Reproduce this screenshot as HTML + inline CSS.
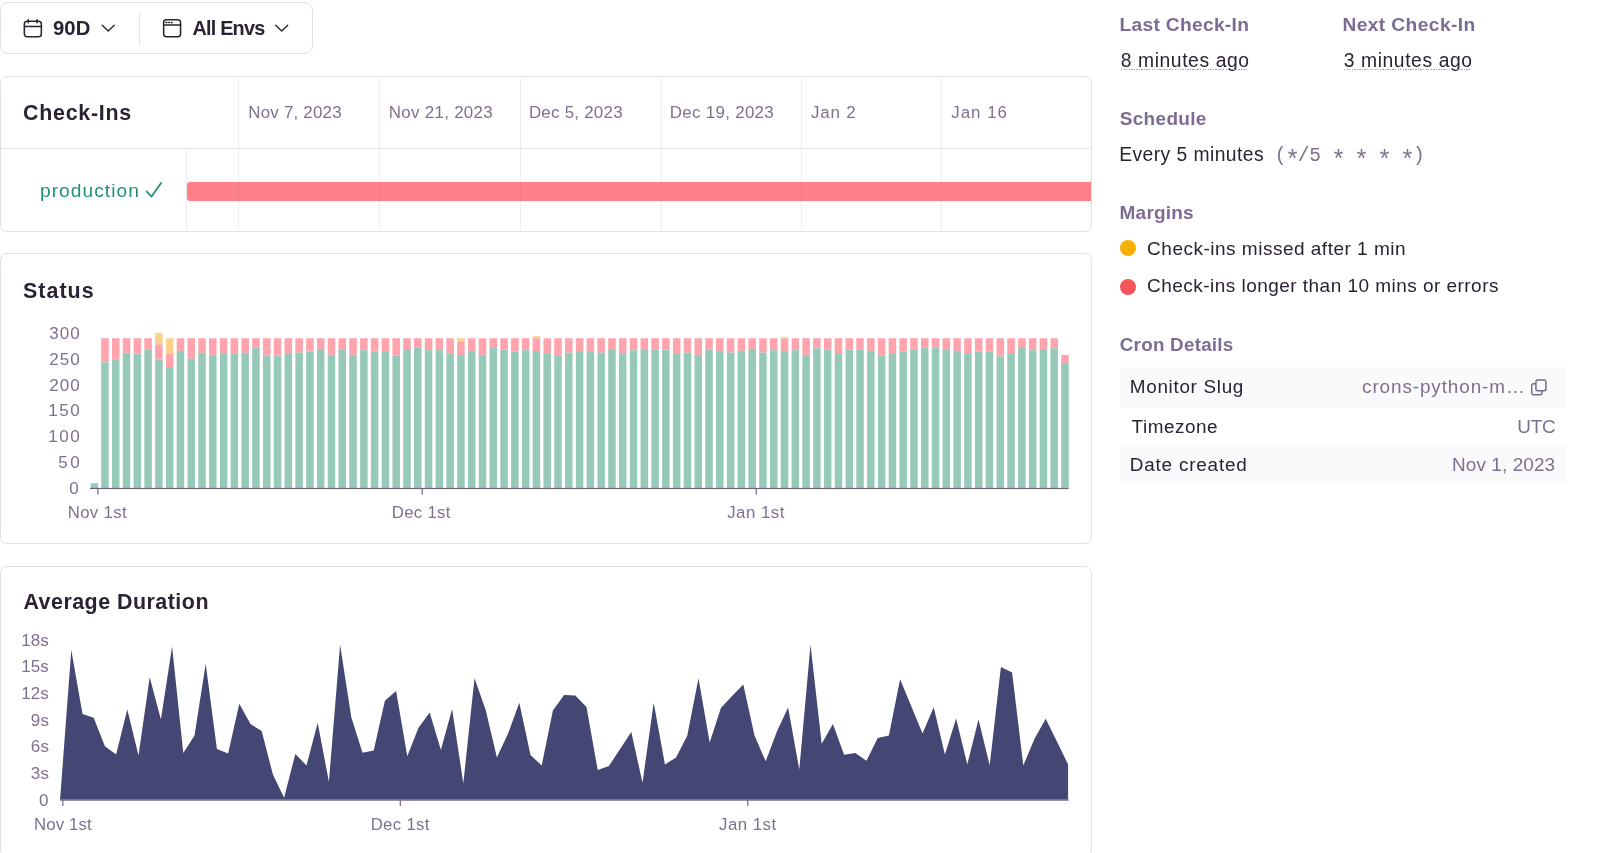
<!DOCTYPE html>
<html><head><meta charset="utf-8"><style>
html,body{margin:0;padding:0;background:#fff;width:1600px;height:853px;overflow:hidden;position:relative}
.t{position:absolute;white-space:nowrap}
.bl{display:inline-block;width:0;height:0;vertical-align:baseline}
</style></head><body><div id="root" style="position:absolute;left:0;top:0;width:1600px;height:853px;will-change:transform">
<div style="position:absolute;left:0.00px;top:2.35px;width:312.65px;height:51.80px;box-sizing:border-box;border:1.3px solid #E2DEE7;border-radius:8px;background:#fff"></div>
<div style="position:absolute;left:139.20px;top:13.00px;width:1.20px;height:30.50px;background:#E2DEE7"></div>
<svg style="position:absolute;left:22px;top:17px" width="22" height="22" viewBox="0 0 22 22" fill="none" stroke="#2B2233" stroke-width="1.55" stroke-linecap="round" stroke-linejoin="round">
<rect x="2.35" y="4.15" width="17" height="15.6" rx="2.8"/><line x1="2.35" y1="9.5" x2="19.35" y2="9.5"/><line x1="6.3" y1="2.8" x2="6.3" y2="5.8"/><line x1="15" y1="2.8" x2="15" y2="5.8"/></svg>
<svg style="position:absolute;left:100px;top:22px" width="16" height="12" viewBox="0 0 16 12" fill="none" stroke="#2B2233" stroke-width="1.4" stroke-linecap="round" stroke-linejoin="round"><polyline points="2.2,3.2 8.2,9.1 14.2,3.2"/></svg>
<div class="t" id="b90d" style="left:53.10px;top:18.00px;font-size:20.30px;line-height:20.30px;font-weight:700;color:#2B2233;letter-spacing:0.000px;font-family:'Liberation Sans', sans-serif;">90D<span class="bl"></span></div>
<svg style="position:absolute;left:161px;top:17px" width="22" height="22" viewBox="0 0 22 22" fill="none" stroke="#2B2233" stroke-width="1.55" stroke-linecap="round" stroke-linejoin="round">
<rect x="2.65" y="2.65" width="16.9" height="17.1" rx="2.8"/><line x1="2.65" y1="8" x2="19.55" y2="8"/><circle cx="5.35" cy="5.5" r="0.55" fill="#2B2233" stroke-width="1"/><circle cx="8" cy="5.5" r="0.55" fill="#2B2233" stroke-width="1"/><circle cx="10.6" cy="5.5" r="0.55" fill="#2B2233" stroke-width="1"/></svg>
<svg style="position:absolute;left:273px;top:22px" width="16" height="12" viewBox="0 0 16 12" fill="none" stroke="#2B2233" stroke-width="1.4" stroke-linecap="round" stroke-linejoin="round"><polyline points="2.7,3.2 8.7,9.1 14.7,3.2"/></svg>
<div class="t" id="benv" style="left:192.50px;top:19.00px;font-size:19.80px;line-height:19.80px;font-weight:700;color:#2B2233;letter-spacing:-0.770px;font-family:'Liberation Sans', sans-serif;">All Envs<span class="bl"></span></div>
<div style="position:absolute;left:0.00px;top:75.85px;width:1092.05px;height:155.70px;box-sizing:border-box;border:1.3px solid #E2DEE7;border-radius:7px;background:#fff"></div>
<div style="position:absolute;left:0.00px;top:147.70px;width:1092.00px;height:1.25px;background:#E2DEE7"></div>
<div style="position:absolute;left:185.80px;top:148.00px;width:1.10px;height:82.00px;background:#ECE9F0"></div>
<div class="t" id="tci" style="left:23.05px;top:103.01px;font-size:21.40px;line-height:21.40px;font-weight:700;color:#2B2233;letter-spacing:0.738px;font-family:'Liberation Sans', sans-serif;">Check-Ins<span class="bl"></span></div>
<div style="position:absolute;left:187.00px;top:181.60px;width:904.00px;height:19.00px;background:#FF808B;border-radius:3px 0 0 3px"></div>
<div style="position:absolute;left:237.80px;top:77.50px;width:1.20px;height:152.50px;background:rgba(100,80,130,0.10)"></div>
<div class="t" id="tl0" style="left:248.35px;top:105.00px;font-size:16.90px;line-height:16.90px;font-weight:400;color:#80708F;letter-spacing:0.215px;font-family:'Liberation Sans', sans-serif;">Nov 7, 2023<span class="bl"></span></div>
<div style="position:absolute;left:378.70px;top:77.50px;width:1.20px;height:152.50px;background:rgba(100,80,130,0.10)"></div>
<div class="t" id="tl1" style="left:388.80px;top:105.00px;font-size:16.90px;line-height:16.90px;font-weight:400;color:#80708F;letter-spacing:0.309px;font-family:'Liberation Sans', sans-serif;">Nov 21, 2023<span class="bl"></span></div>
<div style="position:absolute;left:519.70px;top:77.50px;width:1.20px;height:152.50px;background:rgba(100,80,130,0.10)"></div>
<div class="t" id="tl2" style="left:528.90px;top:105.00px;font-size:16.90px;line-height:16.90px;font-weight:400;color:#80708F;letter-spacing:0.260px;font-family:'Liberation Sans', sans-serif;">Dec 5, 2023<span class="bl"></span></div>
<div style="position:absolute;left:660.60px;top:77.50px;width:1.20px;height:152.50px;background:rgba(100,80,130,0.10)"></div>
<div class="t" id="tl3" style="left:669.80px;top:105.00px;font-size:16.90px;line-height:16.90px;font-weight:400;color:#80708F;letter-spacing:0.310px;font-family:'Liberation Sans', sans-serif;">Dec 19, 2023<span class="bl"></span></div>
<div style="position:absolute;left:801.00px;top:77.50px;width:1.20px;height:152.50px;background:rgba(100,80,130,0.10)"></div>
<div class="t" id="tl4" style="left:811.10px;top:105.00px;font-size:16.90px;line-height:16.90px;font-weight:400;color:#80708F;letter-spacing:0.800px;font-family:'Liberation Sans', sans-serif;">Jan 2<span class="bl"></span></div>
<div style="position:absolute;left:941.20px;top:77.50px;width:1.20px;height:152.50px;background:rgba(100,80,130,0.10)"></div>
<div class="t" id="tl5" style="left:951.30px;top:105.00px;font-size:16.90px;line-height:16.90px;font-weight:400;color:#80708F;letter-spacing:0.980px;font-family:'Liberation Sans', sans-serif;">Jan 16<span class="bl"></span></div>
<div class="t" id="prod" style="left:39.94px;top:181.00px;font-size:19.20px;line-height:19.20px;font-weight:400;color:#1F9176;letter-spacing:1.040px;font-family:'Liberation Sans', sans-serif;">production<span class="bl"></span></div>
<svg style="position:absolute;left:143px;top:179px" width="22" height="20" viewBox="0 0 22 20" fill="none" stroke="#1F9176" stroke-width="1.8" stroke-linecap="round" stroke-linejoin="round"><polyline points="3.6,12.4 8.5,17.5 18.1,3.9"/></svg>
<div style="position:absolute;left:0.00px;top:253.45px;width:1092.05px;height:290.60px;box-sizing:border-box;border:1.3px solid #E2DEE7;border-radius:7px;background:#fff"></div>
<div class="t" id="tst" style="left:22.90px;top:281.01px;font-size:21.40px;line-height:21.40px;font-weight:700;color:#2B2233;letter-spacing:1.080px;font-family:'Liberation Sans', sans-serif;">Status<span class="bl"></span></div>
<div class="t" id="sy0" style="left:49.23px;top:324.61px;font-size:17.00px;line-height:17.00px;font-weight:400;color:#80708F;letter-spacing:1.035px;font-family:'Liberation Sans', sans-serif;">300<span class="bl"></span></div>
<div class="t" id="sy1" style="left:49.23px;top:350.56px;font-size:17.00px;line-height:17.00px;font-weight:400;color:#80708F;letter-spacing:1.035px;font-family:'Liberation Sans', sans-serif;">250<span class="bl"></span></div>
<div class="t" id="sy2" style="left:49.23px;top:376.50px;font-size:17.00px;line-height:17.00px;font-weight:400;color:#80708F;letter-spacing:1.035px;font-family:'Liberation Sans', sans-serif;">200<span class="bl"></span></div>
<div class="t" id="sy3" style="left:48.33px;top:402.46px;font-size:17.00px;line-height:17.00px;font-weight:400;color:#80708F;letter-spacing:1.485px;font-family:'Liberation Sans', sans-serif;">150<span class="bl"></span></div>
<div class="t" id="sy4" style="left:48.33px;top:428.41px;font-size:17.00px;line-height:17.00px;font-weight:400;color:#80708F;letter-spacing:1.485px;font-family:'Liberation Sans', sans-serif;">100<span class="bl"></span></div>
<div class="t" id="sy5" style="left:58.25px;top:454.36px;font-size:17.00px;line-height:17.00px;font-weight:400;color:#80708F;letter-spacing:2.500px;font-family:'Liberation Sans', sans-serif;">50<span class="bl"></span></div>
<div class="t" id="sy6" style="left:69.30px;top:480.31px;font-size:17.00px;line-height:17.00px;font-weight:400;color:#80708F;letter-spacing:4.750px;font-family:'Liberation Sans', sans-serif;">0<span class="bl"></span></div>
<div style="position:absolute;left:0.00px;top:565.65px;width:1092.05px;height:290.00px;box-sizing:border-box;border:1.3px solid #E2DEE7;border-radius:7px;background:#fff"></div>
<svg style="position:absolute;left:0;top:0" width="1100" height="860">
<rect x="101.20" y="338.25" width="7.5" height="24.00" fill="#FFA3AD"/>
<rect x="101.20" y="362.25" width="7.5" height="125.95" fill="#97C9B8"/>
<rect x="111.99" y="338.25" width="7.5" height="21.00" fill="#FFA3AD"/>
<rect x="111.99" y="359.25" width="7.5" height="128.95" fill="#97C9B8"/>
<rect x="122.77" y="338.25" width="7.5" height="14.60" fill="#FFA3AD"/>
<rect x="122.77" y="352.85" width="7.5" height="135.35" fill="#97C9B8"/>
<rect x="133.56" y="338.25" width="7.5" height="15.10" fill="#FFA3AD"/>
<rect x="133.56" y="353.35" width="7.5" height="134.85" fill="#97C9B8"/>
<rect x="144.35" y="338.25" width="7.5" height="11.00" fill="#FFA3AD"/>
<rect x="144.35" y="349.25" width="7.5" height="138.95" fill="#97C9B8"/>
<rect x="155.13" y="332.90" width="7.5" height="11.50" fill="#FAD28B"/>
<rect x="155.13" y="344.40" width="7.5" height="15.20" fill="#FFA3AD"/>
<rect x="155.13" y="359.60" width="7.5" height="128.60" fill="#97C9B8"/>
<rect x="165.92" y="338.25" width="7.5" height="15.55" fill="#FAD28B"/>
<rect x="165.92" y="353.80" width="7.5" height="13.20" fill="#FFA3AD"/>
<rect x="165.92" y="367.00" width="7.5" height="121.20" fill="#97C9B8"/>
<rect x="176.71" y="338.25" width="7.5" height="12.60" fill="#FFA3AD"/>
<rect x="176.71" y="350.85" width="7.5" height="137.35" fill="#97C9B8"/>
<rect x="187.50" y="338.25" width="7.5" height="20.50" fill="#FFA3AD"/>
<rect x="187.50" y="358.75" width="7.5" height="129.45" fill="#97C9B8"/>
<rect x="198.28" y="338.25" width="7.5" height="14.60" fill="#FFA3AD"/>
<rect x="198.28" y="352.85" width="7.5" height="135.35" fill="#97C9B8"/>
<rect x="209.07" y="338.25" width="7.5" height="16.60" fill="#FFA3AD"/>
<rect x="209.07" y="354.85" width="7.5" height="133.35" fill="#97C9B8"/>
<rect x="219.86" y="338.25" width="7.5" height="14.60" fill="#FFA3AD"/>
<rect x="219.86" y="352.85" width="7.5" height="135.35" fill="#97C9B8"/>
<rect x="230.64" y="338.25" width="7.5" height="15.60" fill="#FFA3AD"/>
<rect x="230.64" y="353.85" width="7.5" height="134.35" fill="#97C9B8"/>
<rect x="241.43" y="338.25" width="7.5" height="14.60" fill="#FFA3AD"/>
<rect x="241.43" y="352.85" width="7.5" height="135.35" fill="#97C9B8"/>
<rect x="252.22" y="338.25" width="7.5" height="9.50" fill="#FFA3AD"/>
<rect x="252.22" y="347.75" width="7.5" height="140.45" fill="#97C9B8"/>
<rect x="263.00" y="338.25" width="7.5" height="17.40" fill="#FFA3AD"/>
<rect x="263.00" y="355.65" width="7.5" height="132.55" fill="#97C9B8"/>
<rect x="273.79" y="338.25" width="7.5" height="17.10" fill="#FFA3AD"/>
<rect x="273.79" y="355.35" width="7.5" height="132.85" fill="#97C9B8"/>
<rect x="284.58" y="338.25" width="7.5" height="14.70" fill="#FFA3AD"/>
<rect x="284.58" y="352.95" width="7.5" height="135.25" fill="#97C9B8"/>
<rect x="295.37" y="338.25" width="7.5" height="14.40" fill="#FFA3AD"/>
<rect x="295.37" y="352.65" width="7.5" height="135.55" fill="#97C9B8"/>
<rect x="306.15" y="338.25" width="7.5" height="13.30" fill="#FFA3AD"/>
<rect x="306.15" y="351.55" width="7.5" height="136.65" fill="#97C9B8"/>
<rect x="316.94" y="338.25" width="7.5" height="10.80" fill="#FFA3AD"/>
<rect x="316.94" y="349.05" width="7.5" height="139.15" fill="#97C9B8"/>
<rect x="327.73" y="338.25" width="7.5" height="16.60" fill="#FFA3AD"/>
<rect x="327.73" y="354.85" width="7.5" height="133.35" fill="#97C9B8"/>
<rect x="338.51" y="338.25" width="7.5" height="11.60" fill="#FFA3AD"/>
<rect x="338.51" y="349.85" width="7.5" height="138.35" fill="#97C9B8"/>
<rect x="349.30" y="338.25" width="7.5" height="16.60" fill="#FFA3AD"/>
<rect x="349.30" y="354.85" width="7.5" height="133.35" fill="#97C9B8"/>
<rect x="360.09" y="338.25" width="7.5" height="12.00" fill="#FFA3AD"/>
<rect x="360.09" y="350.25" width="7.5" height="137.95" fill="#97C9B8"/>
<rect x="370.88" y="338.25" width="7.5" height="13.30" fill="#FFA3AD"/>
<rect x="370.88" y="351.55" width="7.5" height="136.65" fill="#97C9B8"/>
<rect x="381.66" y="338.25" width="7.5" height="13.80" fill="#FFA3AD"/>
<rect x="381.66" y="352.05" width="7.5" height="136.15" fill="#97C9B8"/>
<rect x="392.45" y="338.25" width="7.5" height="17.40" fill="#FFA3AD"/>
<rect x="392.45" y="355.65" width="7.5" height="132.55" fill="#97C9B8"/>
<rect x="403.24" y="338.25" width="7.5" height="10.80" fill="#FFA3AD"/>
<rect x="403.24" y="349.05" width="7.5" height="139.15" fill="#97C9B8"/>
<rect x="414.02" y="338.25" width="7.5" height="9.50" fill="#FFA3AD"/>
<rect x="414.02" y="347.75" width="7.5" height="140.45" fill="#97C9B8"/>
<rect x="424.81" y="338.25" width="7.5" height="12.00" fill="#FFA3AD"/>
<rect x="424.81" y="350.25" width="7.5" height="137.95" fill="#97C9B8"/>
<rect x="435.60" y="338.25" width="7.5" height="11.60" fill="#FFA3AD"/>
<rect x="435.60" y="349.85" width="7.5" height="138.35" fill="#97C9B8"/>
<rect x="446.38" y="338.25" width="7.5" height="15.20" fill="#FFA3AD"/>
<rect x="446.38" y="353.45" width="7.5" height="134.75" fill="#97C9B8"/>
<rect x="457.17" y="338.25" width="7.5" height="3.75" fill="#FAD28B"/>
<rect x="457.17" y="342.00" width="7.5" height="12.85" fill="#FFA3AD"/>
<rect x="457.17" y="354.85" width="7.5" height="133.35" fill="#97C9B8"/>
<rect x="467.96" y="338.25" width="7.5" height="12.60" fill="#FFA3AD"/>
<rect x="467.96" y="350.85" width="7.5" height="137.35" fill="#97C9B8"/>
<rect x="478.75" y="338.25" width="7.5" height="16.90" fill="#FFA3AD"/>
<rect x="478.75" y="355.15" width="7.5" height="133.05" fill="#97C9B8"/>
<rect x="489.53" y="338.25" width="7.5" height="8.90" fill="#FFA3AD"/>
<rect x="489.53" y="347.15" width="7.5" height="141.05" fill="#97C9B8"/>
<rect x="500.32" y="338.25" width="7.5" height="11.30" fill="#FFA3AD"/>
<rect x="500.32" y="349.55" width="7.5" height="138.65" fill="#97C9B8"/>
<rect x="511.11" y="338.25" width="7.5" height="13.30" fill="#FFA3AD"/>
<rect x="511.11" y="351.55" width="7.5" height="136.65" fill="#97C9B8"/>
<rect x="521.89" y="338.25" width="7.5" height="12.00" fill="#FFA3AD"/>
<rect x="521.89" y="350.25" width="7.5" height="137.95" fill="#97C9B8"/>
<rect x="532.68" y="336.20" width="7.5" height="2.05" fill="#FAD28B"/>
<rect x="532.68" y="338.25" width="7.5" height="12.75" fill="#FFA3AD"/>
<rect x="532.68" y="351.00" width="7.5" height="137.20" fill="#97C9B8"/>
<rect x="543.47" y="338.25" width="7.5" height="14.90" fill="#FFA3AD"/>
<rect x="543.47" y="353.15" width="7.5" height="135.05" fill="#97C9B8"/>
<rect x="554.25" y="338.25" width="7.5" height="16.90" fill="#FFA3AD"/>
<rect x="554.25" y="355.15" width="7.5" height="133.05" fill="#97C9B8"/>
<rect x="565.04" y="338.25" width="7.5" height="14.40" fill="#FFA3AD"/>
<rect x="565.04" y="352.65" width="7.5" height="135.55" fill="#97C9B8"/>
<rect x="575.83" y="338.25" width="7.5" height="13.80" fill="#FFA3AD"/>
<rect x="575.83" y="352.05" width="7.5" height="136.15" fill="#97C9B8"/>
<rect x="586.62" y="338.25" width="7.5" height="13.80" fill="#FFA3AD"/>
<rect x="586.62" y="352.05" width="7.5" height="136.15" fill="#97C9B8"/>
<rect x="597.40" y="338.25" width="7.5" height="14.40" fill="#FFA3AD"/>
<rect x="597.40" y="352.65" width="7.5" height="135.55" fill="#97C9B8"/>
<rect x="608.19" y="338.25" width="7.5" height="10.80" fill="#FFA3AD"/>
<rect x="608.19" y="349.05" width="7.5" height="139.15" fill="#97C9B8"/>
<rect x="618.98" y="338.25" width="7.5" height="14.90" fill="#FFA3AD"/>
<rect x="618.98" y="353.15" width="7.5" height="135.05" fill="#97C9B8"/>
<rect x="629.76" y="338.25" width="7.5" height="12.00" fill="#FFA3AD"/>
<rect x="629.76" y="350.25" width="7.5" height="137.95" fill="#97C9B8"/>
<rect x="640.55" y="338.25" width="7.5" height="10.80" fill="#FFA3AD"/>
<rect x="640.55" y="349.05" width="7.5" height="139.15" fill="#97C9B8"/>
<rect x="651.34" y="338.25" width="7.5" height="11.60" fill="#FFA3AD"/>
<rect x="651.34" y="349.85" width="7.5" height="138.35" fill="#97C9B8"/>
<rect x="662.12" y="338.25" width="7.5" height="11.30" fill="#FFA3AD"/>
<rect x="662.12" y="349.55" width="7.5" height="138.65" fill="#97C9B8"/>
<rect x="672.91" y="338.25" width="7.5" height="14.90" fill="#FFA3AD"/>
<rect x="672.91" y="353.15" width="7.5" height="135.05" fill="#97C9B8"/>
<rect x="683.70" y="338.25" width="7.5" height="14.40" fill="#FFA3AD"/>
<rect x="683.70" y="352.65" width="7.5" height="135.55" fill="#97C9B8"/>
<rect x="694.49" y="338.25" width="7.5" height="16.60" fill="#FFA3AD"/>
<rect x="694.49" y="354.85" width="7.5" height="133.35" fill="#97C9B8"/>
<rect x="705.27" y="338.25" width="7.5" height="11.60" fill="#FFA3AD"/>
<rect x="705.27" y="349.85" width="7.5" height="138.35" fill="#97C9B8"/>
<rect x="716.06" y="338.25" width="7.5" height="12.60" fill="#FFA3AD"/>
<rect x="716.06" y="350.85" width="7.5" height="137.35" fill="#97C9B8"/>
<rect x="726.85" y="338.25" width="7.5" height="14.40" fill="#FFA3AD"/>
<rect x="726.85" y="352.65" width="7.5" height="135.55" fill="#97C9B8"/>
<rect x="737.63" y="338.25" width="7.5" height="12.60" fill="#FFA3AD"/>
<rect x="737.63" y="350.85" width="7.5" height="137.35" fill="#97C9B8"/>
<rect x="748.42" y="338.25" width="7.5" height="10.80" fill="#FFA3AD"/>
<rect x="748.42" y="349.05" width="7.5" height="139.15" fill="#97C9B8"/>
<rect x="759.21" y="338.25" width="7.5" height="14.40" fill="#FFA3AD"/>
<rect x="759.21" y="352.65" width="7.5" height="135.55" fill="#97C9B8"/>
<rect x="769.99" y="338.25" width="7.5" height="12.00" fill="#FFA3AD"/>
<rect x="769.99" y="350.25" width="7.5" height="137.95" fill="#97C9B8"/>
<rect x="780.78" y="337.00" width="7.5" height="1.75" fill="#FAD28B"/>
<rect x="780.78" y="338.75" width="7.5" height="13.30" fill="#FFA3AD"/>
<rect x="780.78" y="352.05" width="7.5" height="136.15" fill="#97C9B8"/>
<rect x="791.57" y="338.25" width="7.5" height="12.00" fill="#FFA3AD"/>
<rect x="791.57" y="350.25" width="7.5" height="137.95" fill="#97C9B8"/>
<rect x="802.36" y="338.25" width="7.5" height="16.60" fill="#FFA3AD"/>
<rect x="802.36" y="354.85" width="7.5" height="133.35" fill="#97C9B8"/>
<rect x="813.14" y="338.25" width="7.5" height="10.00" fill="#FFA3AD"/>
<rect x="813.14" y="348.25" width="7.5" height="139.95" fill="#97C9B8"/>
<rect x="823.93" y="338.25" width="7.5" height="11.60" fill="#FFA3AD"/>
<rect x="823.93" y="349.85" width="7.5" height="138.35" fill="#97C9B8"/>
<rect x="834.72" y="338.25" width="7.5" height="14.90" fill="#FFA3AD"/>
<rect x="834.72" y="353.15" width="7.5" height="135.05" fill="#97C9B8"/>
<rect x="845.50" y="338.25" width="7.5" height="11.30" fill="#FFA3AD"/>
<rect x="845.50" y="349.55" width="7.5" height="138.65" fill="#97C9B8"/>
<rect x="856.29" y="338.25" width="7.5" height="11.60" fill="#FFA3AD"/>
<rect x="856.29" y="349.85" width="7.5" height="138.35" fill="#97C9B8"/>
<rect x="867.08" y="338.25" width="7.5" height="12.60" fill="#FFA3AD"/>
<rect x="867.08" y="350.85" width="7.5" height="137.35" fill="#97C9B8"/>
<rect x="877.86" y="338.25" width="7.5" height="17.40" fill="#FFA3AD"/>
<rect x="877.86" y="355.65" width="7.5" height="132.55" fill="#97C9B8"/>
<rect x="888.65" y="338.25" width="7.5" height="14.90" fill="#FFA3AD"/>
<rect x="888.65" y="353.15" width="7.5" height="135.05" fill="#97C9B8"/>
<rect x="899.44" y="338.25" width="7.5" height="13.10" fill="#FFA3AD"/>
<rect x="899.44" y="351.35" width="7.5" height="136.85" fill="#97C9B8"/>
<rect x="910.23" y="338.25" width="7.5" height="11.70" fill="#FFA3AD"/>
<rect x="910.23" y="349.95" width="7.5" height="138.25" fill="#97C9B8"/>
<rect x="921.01" y="338.25" width="7.5" height="9.60" fill="#FFA3AD"/>
<rect x="921.01" y="347.85" width="7.5" height="140.35" fill="#97C9B8"/>
<rect x="931.80" y="338.25" width="7.5" height="9.60" fill="#FFA3AD"/>
<rect x="931.80" y="347.85" width="7.5" height="140.35" fill="#97C9B8"/>
<rect x="942.59" y="338.25" width="7.5" height="11.80" fill="#FFA3AD"/>
<rect x="942.59" y="350.05" width="7.5" height="138.15" fill="#97C9B8"/>
<rect x="953.37" y="338.25" width="7.5" height="12.60" fill="#FFA3AD"/>
<rect x="953.37" y="350.85" width="7.5" height="137.35" fill="#97C9B8"/>
<rect x="964.16" y="338.25" width="7.5" height="15.60" fill="#FFA3AD"/>
<rect x="964.16" y="353.85" width="7.5" height="134.35" fill="#97C9B8"/>
<rect x="974.95" y="338.25" width="7.5" height="13.50" fill="#FFA3AD"/>
<rect x="974.95" y="351.75" width="7.5" height="136.45" fill="#97C9B8"/>
<rect x="985.73" y="338.25" width="7.5" height="13.50" fill="#FFA3AD"/>
<rect x="985.73" y="351.75" width="7.5" height="136.45" fill="#97C9B8"/>
<rect x="996.52" y="338.25" width="7.5" height="18.10" fill="#FFA3AD"/>
<rect x="996.52" y="356.35" width="7.5" height="131.85" fill="#97C9B8"/>
<rect x="1007.31" y="338.25" width="7.5" height="14.80" fill="#FFA3AD"/>
<rect x="1007.31" y="353.05" width="7.5" height="135.15" fill="#97C9B8"/>
<rect x="1018.10" y="338.25" width="7.5" height="8.90" fill="#FFA3AD"/>
<rect x="1018.10" y="347.15" width="7.5" height="141.05" fill="#97C9B8"/>
<rect x="1028.88" y="338.25" width="7.5" height="12.00" fill="#FFA3AD"/>
<rect x="1028.88" y="350.25" width="7.5" height="137.95" fill="#97C9B8"/>
<rect x="1039.67" y="338.25" width="7.5" height="11.70" fill="#FFA3AD"/>
<rect x="1039.67" y="349.95" width="7.5" height="138.25" fill="#97C9B8"/>
<rect x="1050.46" y="338.25" width="7.5" height="10.00" fill="#FFA3AD"/>
<rect x="1050.46" y="348.25" width="7.5" height="139.95" fill="#97C9B8"/>
<rect x="1061.24" y="354.90" width="7.5" height="7.90" fill="#FFA3AD"/>
<rect x="1061.24" y="362.80" width="7.5" height="125.40" fill="#97C9B8"/>
<rect x="90.70" y="483.00" width="7.5" height="1.10" fill="#FFA3AD"/>
<rect x="90.70" y="484.10" width="7.5" height="4.10" fill="#97C9B8"/>
<rect x="90" y="487.9" width="978.6" height="1.2" fill="#71637E"/>
<rect x="97.30" y="488.5" width="1.2" height="6" fill="#71637E"/>
<rect x="421.60" y="488.5" width="1.2" height="6" fill="#71637E"/>
<rect x="755.65" y="488.5" width="1.2" height="6" fill="#71637E"/>
<polygon points="60.1,799.6 60.10,799.20 71.30,649.90 82.50,714.10 93.70,717.80 104.90,746.30 116.10,754.50 127.30,709.40 138.50,755.50 149.70,677.20 160.90,719.60 172.10,646.40 183.30,753.10 194.50,735.60 205.70,663.80 216.90,749.00 228.10,753.50 239.30,703.80 250.50,724.00 261.70,730.90 272.90,774.60 284.10,797.80 295.30,754.10 306.50,765.40 317.70,722.70 328.90,781.80 340.10,644.80 351.30,717.20 362.50,752.70 373.70,750.60 384.90,700.80 396.10,691.10 407.30,756.20 418.50,727.80 429.70,712.50 440.90,750.00 452.10,709.00 463.30,783.40 474.50,678.20 485.70,710.00 496.90,757.60 508.10,733.60 519.30,702.80 530.50,755.10 541.70,765.40 552.90,710.40 564.10,695.00 575.30,695.60 586.50,706.90 597.70,770.10 608.90,766.00 620.10,749.00 631.30,732.00 642.50,782.80 653.70,702.80 664.90,764.40 676.10,757.60 687.30,735.60 698.50,678.20 709.70,742.40 720.90,708.00 732.10,696.00 743.30,684.40 754.50,735.60 765.70,761.30 776.90,731.50 788.10,707.50 799.30,769.50 810.50,644.80 821.70,743.80 832.90,724.00 844.10,754.70 855.30,753.10 866.50,760.70 877.70,738.10 888.90,735.60 900.10,679.20 911.30,706.30 922.50,733.60 933.70,707.30 944.90,754.50 956.10,718.60 967.30,764.40 978.50,719.60 989.70,765.40 1000.90,666.90 1012.10,672.50 1023.30,765.50 1034.50,738.80 1045.70,718.70 1056.90,741.50 1068.10,764.40 1068.1,799.6" fill="#444674"/>
<rect x="60" y="799.3" width="1008.6" height="1.4" fill="#71637E"/>
<rect x="62.20" y="800" width="1.2" height="6" fill="#71637E"/>
<rect x="399.70" y="800" width="1.2" height="6" fill="#71637E"/>
<rect x="747.20" y="800" width="1.2" height="6" fill="#71637E"/>
</svg>
<div class="t" id="tad" style="left:23.45px;top:592.01px;font-size:21.40px;line-height:21.40px;font-weight:700;color:#2B2233;letter-spacing:0.500px;font-family:'Liberation Sans', sans-serif;">Average Duration<span class="bl"></span></div>
<div class="t" id="dy0" style="left:21.35px;top:631.81px;font-size:17.00px;line-height:17.00px;font-weight:400;color:#80708F;letter-spacing:-0.025px;font-family:'Liberation Sans', sans-serif;">18s<span class="bl"></span></div>
<div class="t" id="dy1" style="left:21.35px;top:658.48px;font-size:17.00px;line-height:17.00px;font-weight:400;color:#80708F;letter-spacing:-0.025px;font-family:'Liberation Sans', sans-serif;">15s<span class="bl"></span></div>
<div class="t" id="dy2" style="left:21.35px;top:685.15px;font-size:17.00px;line-height:17.00px;font-weight:400;color:#80708F;letter-spacing:-0.025px;font-family:'Liberation Sans', sans-serif;">12s<span class="bl"></span></div>
<div class="t" id="dy3" style="left:30.85px;top:711.82px;font-size:17.00px;line-height:17.00px;font-weight:400;color:#80708F;letter-spacing:0.200px;font-family:'Liberation Sans', sans-serif;">9s<span class="bl"></span></div>
<div class="t" id="dy4" style="left:30.85px;top:738.49px;font-size:17.00px;line-height:17.00px;font-weight:400;color:#80708F;letter-spacing:0.200px;font-family:'Liberation Sans', sans-serif;">6s<span class="bl"></span></div>
<div class="t" id="dy5" style="left:30.85px;top:765.15px;font-size:17.00px;line-height:17.00px;font-weight:400;color:#80708F;letter-spacing:0.200px;font-family:'Liberation Sans', sans-serif;">3s<span class="bl"></span></div>
<div class="t" id="dy6" style="left:39.00px;top:791.82px;font-size:17.00px;line-height:17.00px;font-weight:400;color:#80708F;letter-spacing:2.000px;font-family:'Liberation Sans', sans-serif;">0<span class="bl"></span></div>
<div class="t" id="sx0" style="left:67.72px;top:505.01px;font-size:16.80px;line-height:16.80px;font-weight:400;color:#80708F;letter-spacing:0.350px;font-family:'Liberation Sans', sans-serif;">Nov 1st<span class="bl"></span></div>
<div class="t" id="sx1" style="left:391.75px;top:505.01px;font-size:16.80px;line-height:16.80px;font-weight:400;color:#80708F;letter-spacing:0.300px;font-family:'Liberation Sans', sans-serif;">Dec 1st<span class="bl"></span></div>
<div class="t" id="sx2" style="left:727.20px;top:505.01px;font-size:16.80px;line-height:16.80px;font-weight:400;color:#80708F;letter-spacing:0.525px;font-family:'Liberation Sans', sans-serif;">Jan 1st<span class="bl"></span></div>
<div class="t" id="dx0" style="left:34.10px;top:817.00px;font-size:16.80px;line-height:16.80px;font-weight:400;color:#80708F;letter-spacing:0.125px;font-family:'Liberation Sans', sans-serif;">Nov 1st<span class="bl"></span></div>
<div class="t" id="dx1" style="left:370.70px;top:817.00px;font-size:16.80px;line-height:16.80px;font-weight:400;color:#80708F;letter-spacing:0.300px;font-family:'Liberation Sans', sans-serif;">Dec 1st<span class="bl"></span></div>
<div class="t" id="dx2" style="left:719.00px;top:817.00px;font-size:16.80px;line-height:16.80px;font-weight:400;color:#80708F;letter-spacing:0.490px;font-family:'Liberation Sans', sans-serif;">Jan 1st<span class="bl"></span></div>
<div class="t" id="rlast" style="left:1119.44px;top:15.00px;font-size:19.20px;line-height:19.20px;font-weight:700;color:#7C6C93;letter-spacing:0.306px;font-family:'Liberation Sans', sans-serif;">Last Check-In<span class="bl"></span></div>
<div class="t" id="rnext" style="left:1342.44px;top:15.00px;font-size:19.20px;line-height:19.20px;font-weight:700;color:#7C6C93;letter-spacing:0.400px;font-family:'Liberation Sans', sans-serif;">Next Check-In<span class="bl"></span></div>
<div class="t" id="r8" style="left:1120.70px;top:50.86px;font-size:19.30px;line-height:19.30px;font-weight:400;color:#2B2233;letter-spacing:0.600px;font-family:'Liberation Sans', sans-serif;">8 minutes ago<span class="bl"></span></div>
<div class="t" id="r3" style="left:1343.70px;top:50.86px;font-size:19.30px;line-height:19.30px;font-weight:400;color:#2B2233;letter-spacing:0.600px;font-family:'Liberation Sans', sans-serif;">3 minutes ago<span class="bl"></span></div>
<div class="t" id="rsch" style="left:1119.76px;top:109.01px;font-size:19.00px;line-height:19.00px;font-weight:700;color:#7C6C93;letter-spacing:0.305px;font-family:'Liberation Sans', sans-serif;">Schedule<span class="bl"></span></div>
<div class="t" id="revery" style="left:1119.15px;top:145.01px;font-size:19.30px;line-height:19.30px;font-weight:400;color:#2B2233;letter-spacing:0.446px;font-family:'Liberation Sans', sans-serif;">Every 5 minutes<span class="bl"></span></div>
<div style="position:absolute;left:1274.65px;top:147.31px;width:11.70px;text-align:center;font-family:'Liberation Mono', monospace;font-size:19.5px;line-height:19.5px;color:#80708F">(</div>
<div style="position:absolute;left:1297.65px;top:147.31px;width:11.70px;text-align:center;font-family:'Liberation Mono', monospace;font-size:19.5px;line-height:19.5px;color:#80708F">/</div>
<div style="position:absolute;left:1309.35px;top:147.31px;width:11.70px;text-align:center;font-family:'Liberation Mono', monospace;font-size:19.5px;line-height:19.5px;color:#80708F">5</div>
<div style="position:absolute;left:1412.95px;top:147.31px;width:11.70px;text-align:center;font-family:'Liberation Mono', monospace;font-size:19.5px;line-height:19.5px;color:#80708F">)</div>
<div style="position:absolute;left:1285.00px;top:148.50px;width:15.00px;text-align:center;font-family:'Liberation Mono', monospace;font-size:25px;line-height:25px;color:#80708F">*</div>
<div style="position:absolute;left:1331.00px;top:148.50px;width:15.00px;text-align:center;font-family:'Liberation Mono', monospace;font-size:25px;line-height:25px;color:#80708F">*</div>
<div style="position:absolute;left:1354.00px;top:148.50px;width:15.00px;text-align:center;font-family:'Liberation Mono', monospace;font-size:25px;line-height:25px;color:#80708F">*</div>
<div style="position:absolute;left:1377.00px;top:148.50px;width:15.00px;text-align:center;font-family:'Liberation Mono', monospace;font-size:25px;line-height:25px;color:#80708F">*</div>
<div style="position:absolute;left:1400.00px;top:148.50px;width:15.00px;text-align:center;font-family:'Liberation Mono', monospace;font-size:25px;line-height:25px;color:#80708F">*</div>
<div style="position:absolute;left:1120.60px;top:69.10px;width:127.00px;height:1.10px;background:repeating-linear-gradient(to right,#A89DB6 0 1.3px,transparent 1.3px 2.55px)"></div>
<div style="position:absolute;left:1343.60px;top:69.10px;width:126.50px;height:1.10px;background:repeating-linear-gradient(to right,#A89DB6 0 1.3px,transparent 1.3px 2.55px)"></div>
<div class="t" id="rmarg" style="left:1119.60px;top:203.01px;font-size:19.00px;line-height:19.00px;font-weight:700;color:#7C6C93;letter-spacing:0.200px;font-family:'Liberation Sans', sans-serif;">Margins<span class="bl"></span></div>
<div style="position:absolute;left:1119.60px;top:240.25px;width:16.00px;height:16.00px;background:#F5B000;border-radius:50%"></div>
<div style="position:absolute;left:1119.60px;top:278.75px;width:16.00px;height:16.00px;background:#F55459;border-radius:50%"></div>
<div class="t" id="rmiss" style="left:1147.10px;top:239.00px;font-size:19.00px;line-height:19.00px;font-weight:400;color:#2B2233;letter-spacing:0.500px;font-family:'Liberation Sans', sans-serif;">Check-ins missed after 1 min<span class="bl"></span></div>
<div class="t" id="rlong" style="left:1147.10px;top:276.01px;font-size:19.00px;line-height:19.00px;font-weight:400;color:#2B2233;letter-spacing:0.464px;font-family:'Liberation Sans', sans-serif;">Check-ins longer than 10 mins or errors<span class="bl"></span></div>
<div class="t" id="rcron" style="left:1119.76px;top:336.01px;font-size:18.80px;line-height:18.80px;font-weight:700;color:#7C6C93;letter-spacing:0.263px;font-family:'Liberation Sans', sans-serif;">Cron Details<span class="bl"></span></div>
<div style="position:absolute;left:1119.50px;top:367.00px;width:446.75px;height:40.50px;background:#FAF9FB"></div>
<div style="position:absolute;left:1119.50px;top:446.00px;width:446.75px;height:37.50px;background:#FAF9FB"></div>
<div class="t" id="rms" style="left:1129.80px;top:378.00px;font-size:18.90px;line-height:18.90px;font-weight:400;color:#2B2233;letter-spacing:0.681px;font-family:'Liberation Sans', sans-serif;">Monitor Slug<span class="bl"></span></div>
<div class="t" id="rtz" style="left:1131.60px;top:418.00px;font-size:18.90px;line-height:18.90px;font-weight:400;color:#2B2233;letter-spacing:0.535px;font-family:'Liberation Sans', sans-serif;">Timezone<span class="bl"></span></div>
<div class="t" id="rdc" style="left:1129.80px;top:456.00px;font-size:18.90px;line-height:18.90px;font-weight:400;color:#2B2233;letter-spacing:0.804px;font-family:'Liberation Sans', sans-serif;">Date created<span class="bl"></span></div>
<div class="t" id="rslug" style="left:1362.05px;top:378.00px;font-size:18.90px;line-height:18.90px;font-weight:400;color:#80708F;letter-spacing:0.900px;font-family:'Liberation Sans', sans-serif;">crons-python-m…<span class="bl"></span></div>
<div class="t" id="rutc" style="left:1517.35px;top:418.00px;font-size:18.90px;line-height:18.90px;font-weight:400;color:#80708F;letter-spacing:-0.255px;font-family:'Liberation Sans', sans-serif;">UTC<span class="bl"></span></div>
<div class="t" id="rnov" style="left:1452.10px;top:456.00px;font-size:18.90px;line-height:18.90px;font-weight:400;color:#80708F;letter-spacing:0.105px;font-family:'Liberation Sans', sans-serif;">Nov 1, 2023<span class="bl"></span></div>
<svg style="position:absolute;left:1529px;top:378px" width="20" height="20" viewBox="0 0 20 20" fill="none" stroke="#76688A" stroke-width="1.45" stroke-linejoin="round">
<rect x="6.9" y="1.9" width="10" height="10.8" rx="1.9"/><path d="M6.9 5.8 H4.5 A1.8 1.8 0 0 0 2.7 7.6 V14.9 A1.8 1.8 0 0 0 4.5 16.7 H11.15 A1.8 1.8 0 0 0 12.95 14.9 V12.7"/></svg>
</div></body></html>
